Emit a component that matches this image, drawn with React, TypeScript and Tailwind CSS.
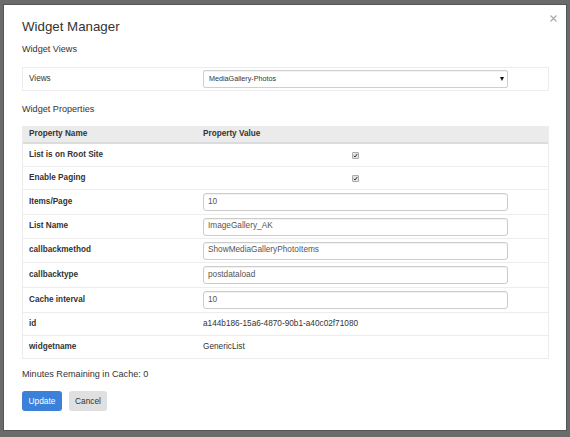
import React from "react";

type Row = {
  name: string;
  kind: "check" | "input" | "text";
  value?: string;
  h: string;
};

const rows: Row[] = [
  { name: "List is on Root Site", kind: "check", h: "h-[22px]" },
  { name: "Enable Paging", kind: "check", h: "h-[23px]" },
  { name: "Items/Page", kind: "input", value: "10", h: "h-[25px]" },
  { name: "List Name", kind: "input", value: "ImageGallery_AK", h: "h-[24px]" },
  { name: "callbackmethod", kind: "input", value: "ShowMediaGalleryPhotoItems", h: "h-[24px]" },
  { name: "callbacktype", kind: "input", value: "postdataload", h: "h-[25px]" },
  { name: "Cache interval", kind: "input", value: "10", h: "h-[25px]" },
  { name: "id", kind: "text", value: "a144b186-15a6-4870-90b1-a40c02f71080", h: "h-[23px]" },
  { name: "widgetname", kind: "text", value: "GenericList", h: "h-[23px]" },
];

const CheckBox = () => (
  <span className="flex h-[7px] w-[7px] items-center justify-center rounded-[1px] border border-[#aaa] bg-[#e4e4e4]">
    <svg width="5" height="5" viewBox="0 0 10 10">
      <path d="M1.5 5.5 L4 8 L8.5 2" fill="none" stroke="#333" strokeWidth="2" />
    </svg>
  </span>
);

const App: React.FC = () => {
  return (
    <div
      className="h-[437px] w-[570px] overflow-hidden bg-[#6b6b6b] pl-[4px] pt-[5px] text-[#333]"
      style={{ fontFamily: '"Liberation Sans", Arial, sans-serif' }}
    >
      <div className="relative flex h-[425px] w-[562px] flex-col bg-white px-[18px] pt-[14px] shadow-[0_0_0_1px_#555]">
        {/* close */}
        <button className="absolute right-[7px] top-[7px] flex h-[12px] w-[12px] items-center justify-center">
          <svg width="7" height="7" viewBox="0 0 7 7">
            <path d="M0.5 0.5 L6.5 6.5 M6.5 0.5 L0.5 6.5" stroke="#a8a8a8" strokeWidth="1.1" />
          </svg>
        </button>

        <h1 className="h-[16px] text-[13.3px] leading-[16px]">Widget Manager</h1>
        <h2 className="mt-[8px] h-[12px] text-[9.1px] leading-[12px]">Widget Views</h2>

        {/* Views */}
        <div className="mt-[12px] flex h-[24px] w-[527px] items-center border border-[#ececec]">
          <div className="w-[180px] pl-[6px] text-[8.2px]">Views</div>
          <div className="relative flex h-[18px] w-[305px] items-center rounded-[2px] border border-[#cfcfcf] pl-[5px] text-[7.2px] shadow-[inset_0_1px_1px_rgba(0,0,0,0.05)]">
            MediaGallery-Photos
            <span className="absolute right-[3px] top-[6px] h-0 w-0 border-l-[2.5px] border-r-[2.5px] border-t-[4px] border-l-transparent border-r-transparent border-t-[#111]" />
          </div>
        </div>

        <h2 className="mt-[12px] h-[12px] text-[9.1px] leading-[12px]">Widget Properties</h2>

        {/* Table */}
        <div className="mt-[11px] w-[527px] border border-t-0 border-[#ececec]">
          <div className="flex h-[18px] items-center border-b-2 border-[#dcdcdc] bg-[#ebebeb] text-[8.2px] font-bold">
            <div className="w-[180px] pl-[6px]">Property Name</div>
            <div>Property Value</div>
          </div>
          {rows.map((r, i) => (
            <div
              key={r.name}
              className={`flex items-center ${r.h} ${i > 0 ? "border-t border-[#ededed]" : ""}`}
            >
              <div className="w-[180px] pl-[6px] text-[8.2px] font-bold">{r.name}</div>
              <div className="flex w-[305px] items-center">
                {r.kind === "check" && (
                  <div className="flex w-full justify-center">
                    <CheckBox />
                  </div>
                )}
                {r.kind === "input" && (
                  <div className="flex h-[18px] w-full items-center rounded-[3px] border border-[#cccccc] pl-[4px] text-[8.25px] text-[#555] shadow-[inset_0_1px_1px_rgba(0,0,0,0.06)]">
                    {r.value}
                  </div>
                )}
                {r.kind === "text" && <span className="text-[8.25px]">{r.value}</span>}
              </div>
            </div>
          ))}
        </div>

        <p className="mt-[9px] h-[12px] text-[9.1px] leading-[12px]">Minutes Remaining in Cache: 0</p>

        <div className="mt-[11px] flex gap-[7px]">
          <button className="h-[20px] w-[40px] rounded-[3px] bg-[#3b81d9] text-[8.3px] text-white">Update</button>
          <button className="h-[20px] w-[38px] rounded-[3px] bg-[#e0e0e0] text-[8.3px] text-[#333]">Cancel</button>
        </div>
      </div>
    </div>
  );
};

export default App;
